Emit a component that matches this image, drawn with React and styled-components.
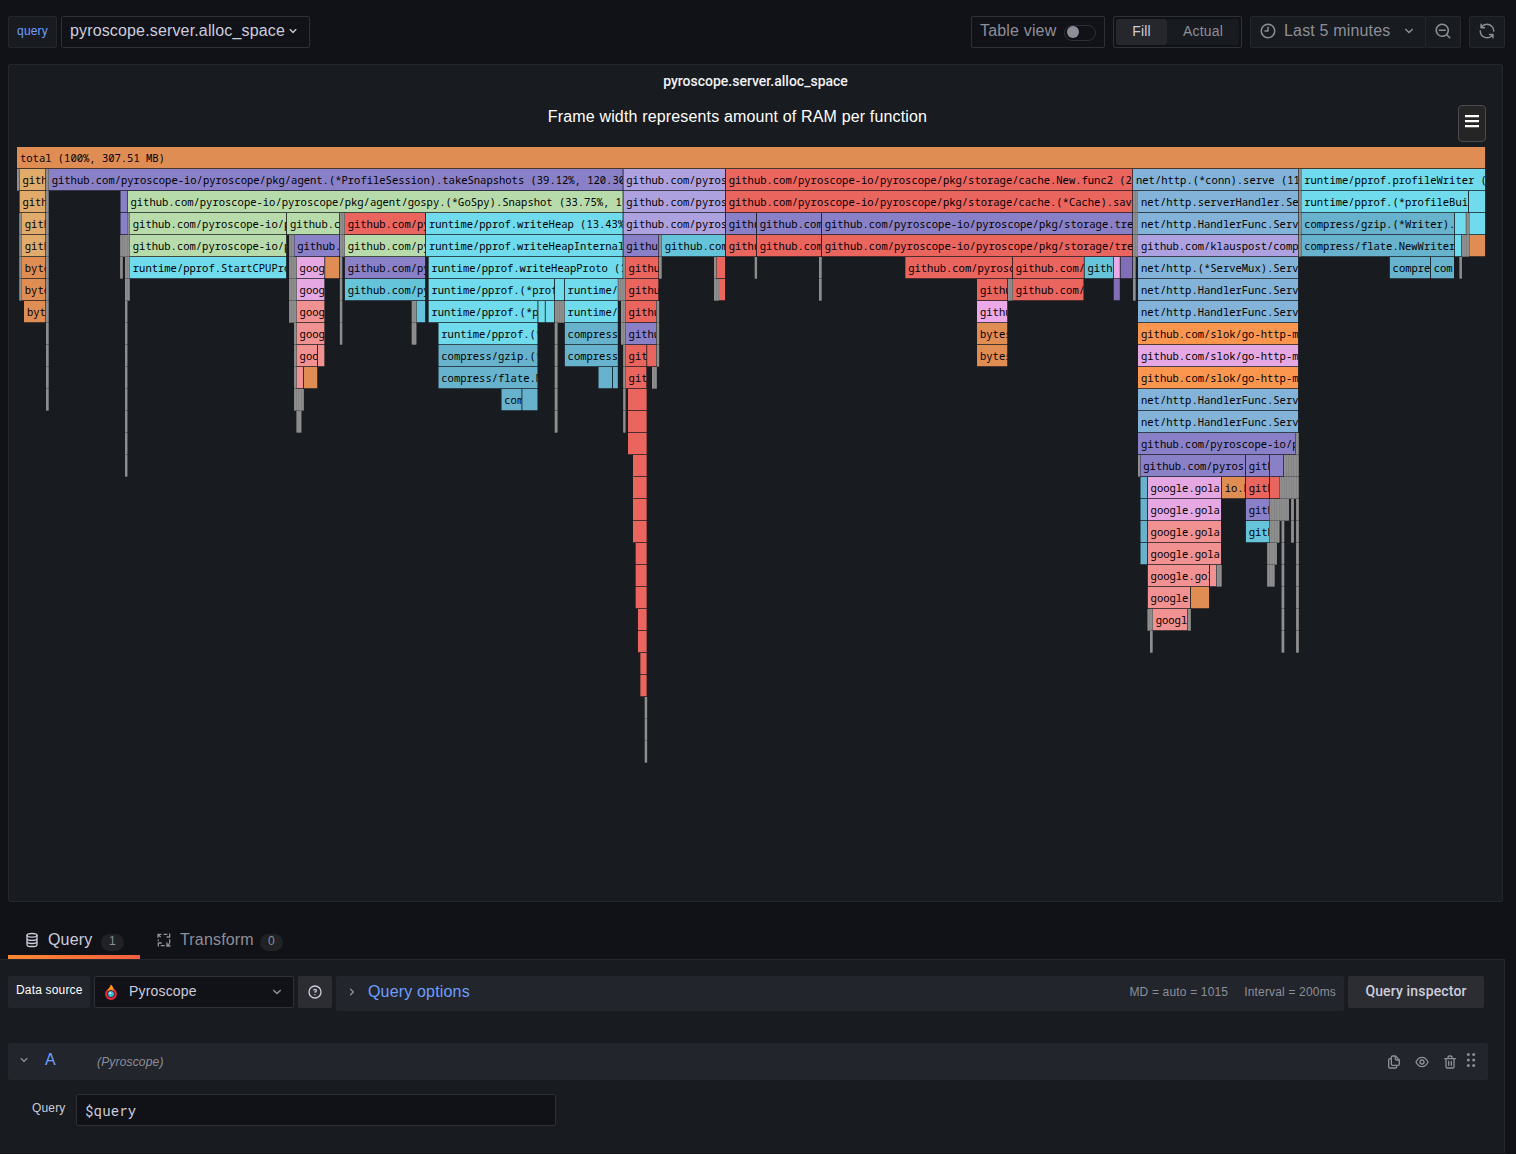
import React from 'react';
import styled, { createGlobalStyle } from 'styled-components';

const c = {
  canvas: '#111217',
  panel: '#181b1f',
  secondary: '#22252b',
  border: '#25272c',
  inputBorder: '#2e3036',
  button: '#2c2d32',
  text: '#ccccdc',
  muted: '#8e8e99',
  link: '#6e9fff',
};

const GlobalStyle = createGlobalStyle`
  * { box-sizing: border-box; }
  body {
    margin: 0;
    background: ${c.canvas};
    color: ${c.text};
    font-family: "Liberation Sans", Arial, sans-serif;
    font-size: 16px;
    letter-spacing: 0.01071em;
    overflow: hidden;
  }
`;

/* ---------- icons ---------- */

const PATHS = {
  angleDown: 'M17,9.17a1,1,0,0,0-1.41,0L12,12.71,8.46,9.17a1,1,0,0,0-1.41,0,1,1,0,0,0,0,1.42l4.24,4.24a1,1,0,0,0,1.42,0L17,10.59A1,1,0,0,0,17,9.17Z',
  angleRight: 'M14.83,11.29,10.59,7.05a1,1,0,0,0-1.42,0,1,1,0,0,0,0,1.41L12.71,12,9.17,15.54a1,1,0,0,0,0,1.41,1,1,0,0,0,.71.29,1,1,0,0,0,.71-.29l4.24-4.24A1,1,0,0,0,14.83,11.29Z',
  clock: 'M12,2A10,10,0,1,0,22,12,10,10,0,0,0,12,2Zm0,18a8,8,0,1,1,8-8A8,8,0,0,1,12,20ZM12,6a1,1,0,0,0-1,1v4H8a1,1,0,0,0,0,2h4a1,1,0,0,0,1-1V7A1,1,0,0,0,12,6Z',
  zoomOut: 'M21.71,20.29,18,16.61A9,9,0,1,0,16.61,18l3.68,3.68a1,1,0,0,0,1.42,0A1,1,0,0,0,21.71,20.29ZM11,18a7,7,0,1,1,7-7A7,7,0,0,1,11,18ZM15,10H7a1,1,0,0,0,0,2h8a1,1,0,0,0,0-2Z',
  sync: 'M19.91,15.51H15.38a1,1,0,0,0,0,2h2.4A8,8,0,0,1,4,12a1,1,0,0,0-2,0,10,10,0,0,0,16.88,7.23V21a1,1,0,0,0,2,0V16.5A1,1,0,0,0,19.91,15.51ZM12,2A10,10,0,0,0,5.12,4.77V3a1,1,0,0,0-2,0V7.5a1,1,0,0,0,1,1h4.5a1,1,0,0,0,0-2H6.22A8,8,0,0,1,20,12a1,1,0,0,0,2,0A10,10,0,0,0,12,2Z',
  question: 'M11.29,15.29a1.58,1.58,0,0,0-.12.15.76.76,0,0,0-.09.18.64.64,0,0,0-.06.18,1.36,1.36,0,0,0,0,.2.84.84,0,0,0,.08.38.9.9,0,0,0,.54.54.94.94,0,0,0,.76,0,.9.9,0,0,0,.54-.54A1,1,0,0,0,13,16a1,1,0,0,0-.29-.71A1,1,0,0,0,11.29,15.29ZM12,2A10,10,0,1,0,22,12,10,10,0,0,0,12,2Zm0,18a8,8,0,1,1,8-8A8,8,0,0,1,12,20ZM12,7A3,3,0,0,0,9.4,8.5a1,1,0,1,0,1.73,1A1,1,0,0,1,12,9a1,1,0,0,1,0,2,1,1,0,1,0,0,2,3,3,0,0,0,0-6Z',
  trash: 'M10,18a1,1,0,0,0,1-1V11a1,1,0,0,0-2,0v6A1,1,0,0,0,10,18ZM20,6H16V5a3,3,0,0,0-3-3H11A3,3,0,0,0,8,5V6H4A1,1,0,0,0,4,8H5V19a3,3,0,0,0,3,3h8a3,3,0,0,0,3-3V8h1a1,1,0,0,0,0-2ZM10,5a1,1,0,0,1,1-1h2a1,1,0,0,1,1,1V6H10Zm7,14a1,1,0,0,1-1,1H8a1,1,0,0,1-1-1V8H17Zm-3-1a1,1,0,0,0,1-1V11a1,1,0,0,0-2,0v6A1,1,0,0,0,14,18Z',
  eye: 'M21.92,11.6C19.9,6.91,16.1,4,12,4S4.1,6.91,2.08,11.6a1,1,0,0,0,0,.8C4.1,17.09,7.9,20,12,20s7.9-2.91,9.92-7.6A1,1,0,0,0,21.92,11.6ZM12,18c-3.17,0-6.17-2.29-7.9-6C5.83,8.29,8.83,6,12,6s6.17,2.29,7.9,6C18.17,15.71,15.17,18,12,18ZM12,8a4,4,0,1,0,4,4A4,4,0,0,0,12,8Zm0,6a2,2,0,1,1,2-2A2,2,0,0,1,12,14Z',
  copy: 'M21,8.94a1.31,1.31,0,0,0-.06-.27l0-.09a1.07,1.07,0,0,0-.19-.28h0l-6-6h0a1.07,1.07,0,0,0-.28-.19.32.32,0,0,0-.09,0A.88.88,0,0,0,14.05,2H10A3,3,0,0,0,7,5V6H6A3,3,0,0,0,3,9V19a3,3,0,0,0,3,3h8a3,3,0,0,0,3-3V18h1a3,3,0,0,0,3-3V9S21,9,21,8.94ZM15,5.41,17.59,8H16a1,1,0,0,1-1-1ZM15,19a1,1,0,0,1-1,1H6a1,1,0,0,1-1-1V9A1,1,0,0,1,6,8H7v7a3,3,0,0,0,3,3h5Zm4-4a1,1,0,0,1-1,1H10a1,1,0,0,1-1-1V5a1,1,0,0,1,1-1h3V7a3,3,0,0,0,3,3h3Z',
};

const Glyph = styled.svg`
  display: block;
  flex: none;
  margin-bottom: ${(p) => p.$lift || 0}px;
  fill: currentColor;
`;

const Icon = ({ name, size = 16, lift }) => (
  <Glyph $lift={lift} width={size} height={size} viewBox="0 0 24 24">
    <path d={PATHS[name]} />
  </Glyph>
);

const StrokeGlyph = styled(Glyph)`
  fill: none;
  stroke: currentColor;
  stroke-width: 2;
  stroke-linecap: round;
`;

const DatabaseIcon = () => (
  <StrokeGlyph width="16" height="16" viewBox="0 0 24 24">
    <ellipse cx="12" cy="5" rx="7.500" ry="2.800" />
    <path d="M4.500 5v14c0 1.600 3.400 2.800 7.500 2.800s7.500-1.200 7.500-2.800V5M4.500 9.700c0 1.600 3.400 2.800 7.500 2.800s7.500-1.200 7.500-2.800M4.500 14.400c0 1.600 3.400 2.800 7.500 2.800s7.500-1.200 7.500-2.800" />
  </StrokeGlyph>
);

const ProcessIcon = () => (
  <StrokeGlyph width="16" height="16" viewBox="0 0 24 24">
    <path d="M3 8V3.500H7.500M3.500 4L6.500 7M12 3.500h4.500M16.500 7.500H20.500V3M20.500 11.500V16M16.500 16.500V21H21M17 20.500l3-3M12.500 20.500H8M8 16.500H3.500V21M3.500 13V12" />
  </StrokeGlyph>
);

const DragDots = () => (
  <Glyph width="10" height="16" viewBox="0 0 10 16">
    {[2.5, 8, 13.5].map((y) => (
      <React.Fragment key={y}>
        <circle cx="2.300" cy={y} r="1.500" />
        <circle cx="7.700" cy={y} r="1.500" />
      </React.Fragment>
    ))}
  </Glyph>
);

const PyroscopeLogo = () => (
  <Glyph width="16" height="16" viewBox="0 0 16 16">
    <circle cx="8" cy="10" r="4.800" fill="#181b1f" stroke="#ed2939" strokeWidth="2.200" />
    <path d="M7.600 0.400c2.200 1.300 3 3.200 3.200 6.400L8 5.800 5 6.800C4.700 4.500 7.300 3.500 7.600 0.400Z" fill="#f9961a" />
    <circle cx="8" cy="10" r="3" fill="#35b8d0" />
    <circle cx="7.200" cy="9.200" r="1.100" fill="#b9eef7" />
  </Glyph>
);

/* ---------- toolbar ---------- */

const Page = styled.div`
  display: flex;
  flex-direction: column;
  width: 1516px;
  height: 1154px;
  padding-bottom: 1px;
`;

const Toolbar = styled.header`
  display: flex;
  justify-content: space-between;
  height: 64px;
  padding: 16px 11px 16px 8px;
`;

const Group = styled.div`
  display: flex;
  gap: ${(p) => p.$gap || 0}px;
`;

const VariableLabel = styled.label`
  display: flex;
  align-items: center;
  justify-content: center;
  width: 49px;
  height: 32px;
  padding-bottom: 2px;
  border: 1px solid ${c.border};
  border-radius: 2px;
  background: ${c.panel};
  color: ${c.link};
  font-size: 12px;
`;

const Outlined = styled.div`
  display: flex;
  align-items: center;
  width: ${(p) => p.$w}px;
  height: 32px;
  padding: ${(p) => p.$pad || '0 8px'};
  border: 1px solid ${c.inputBorder};
  border-radius: 2px;
  background: ${c.canvas};
  color: ${(p) => (p.$muted ? c.muted : c.text)};
`;

const Label = styled.span`
  padding-bottom: ${(p) => (p.$lift === undefined ? 3 : p.$lift)}px;
  line-height: 20px;
  white-space: nowrap;
`;

const VariableValue = styled(Label)`
  letter-spacing: 0.150px;
`;

const Switch = styled.span`
  display: flex;
  align-items: center;
  width: 32px;
  height: 16px;
  margin: 1px 0 0 8px;
  padding: 0 2px 1px;
  border: 1px solid ${c.inputBorder};
  border-radius: 8px;
  &::before {
    content: '';
    width: 12px;
    height: 12px;
    border-radius: 50%;
    background: ${c.muted};
  }
`;

const Segment = styled.button`
  flex: ${(p) => p.$grow};
  height: 26px;
  padding: 0 0 2px;
  border: 0;
  border-radius: 2px;
  background: ${(p) => (p.$active ? '#26272c' : c.panel)};
  color: ${(p) => (p.$active ? c.text : c.muted)};
  font: 14px "Liberation Sans", Arial, sans-serif;
  letter-spacing: 0.01071em;
`;

const ToolButton = styled.button`
  display: flex;
  align-items: center;
  justify-content: ${(p) => (p.$spread ? 'flex-start' : 'center')};
  width: ${(p) => p.$w}px;
  height: 32px;
  margin-left: ${(p) => p.$ml || 0}px;
  padding: 0 ${(p) => (p.$spread ? 7 : 0)}px 0 ${(p) => (p.$spread ? 8 : 0)}px;
  border: 1px solid ${c.border};
  border-radius: 2px;
  background: ${c.panel};
  color: ${c.muted};
  font: inherit;
  letter-spacing: inherit;
`;

const TimeText = styled(Label)`
  flex: 1;
  margin-left: 7px;
  text-align: left;
`;

/* ---------- flame graph panel ---------- */

const Panel = styled.section`
  display: flex;
  flex-direction: column;
  width: 1495px;
  height: 838px;
  margin-left: 8px;
  padding: 0 8px;
  border: 1px solid ${c.border};
  border-radius: 2px;
  background: ${c.panel};
`;

const PanelTitle = styled.h2`
  margin: 0;
  height: 32px;
  color: #f0f0f6;
  font: 500 14px/32px Roboto, sans-serif;
  letter-spacing: 0;
  text-align: center;
`;

const ChartHeader = styled.div`
  display: flex;
  align-items: flex-start;
  height: 50px;
  padding: 8px 8px 0 0;
`;

const ChartTitle = styled.div`
  flex: 1;
  padding: 3px 0 0 0;
  color: #fff;
  letter-spacing: 0.155px;
  line-height: 18px;
  text-align: center;
`;

const MenuButton = styled.button`
  display: flex;
  align-items: center;
  justify-content: center;
  width: 28px;
  height: 37px;
  padding: 0 0 5px;
  border: 1px solid #4b4b4d;
  border-radius: 4px;
  background: #252525;
  color: #fff;
`;

const Chart = styled.svg`
  display: block;
  width: 1478px;
  height: 640px;
  flex: none;
`;

const FrameText = styled.text`
  font: 10.500px "Noto Sans Mono", "DejaVu Sans Mono", monospace;
  letter-spacing: 0;
  white-space: pre;
  fill: #000;
`;

const O = '#e08d54';
const T = '#e0ab6b';
const P = '#8a80c7';
const G = '#b7dbab';
const L = '#aea1e0';
const R = '#eb655f';
const B = '#83b3d8';
const C = '#6fdbed';
const D = '#67b3cd';
const E = '#66c4da';
const K = '#e5a8e2';
const S = '#f29191';
const V = '#806eb7';
const F = '#fc964f';
const X = '#8e8e8e';

const HF = 'net/http.HandlerFunc.ServeHTTP';
const GH = 'github.com/pyroscope-io/pyroscope/pkg/';
const SLOK = 'github.com/slok/go-http-metrics/middleware';
const GG = 'google.golang.org/protobuf';

/* Each row lists its frames as [start, end, fill, name]. */
const ROWS = [
  [[17, 1485.8, O, 'total (100%, 307.51 MB)']],
  [[17, 19.4, X], [19.4, 46.1, T, GH], [46.1, 48.7, X], [48.7, 623.3, P, GH + 'agent.(*ProfileSession).takeSnapshots (39.12%, 120.30 MB)'], [623.3, 725.7, L, GH], [725.7, 1133, R, GH + 'storage/cache.New.func2 (27.75%, 85.33 MB)'], [1133, 1298.8, B, 'net/http.(*conn).serve (11.26%, 34.63 MB)'], [1298.8, 1301.2, X], [1301.2, 1485.8, C, 'runtime/pprof.profileWriter (12.54%)']],
  [[19.4, 46.1, T, GH], [46.1, 48.7, X], [120.3, 127.5, P], [127.5, 623.3, G, GH + 'agent/gospy.(*GoSpy).Snapshot (33.75%, 103.78 MB)'], [623.3, 725.7, L, GH], [725.7, 1133, R, GH + 'storage/cache.(*Cache).saveToDisk'], [1133, 1138, X], [1138, 1298.8, B, 'net/http.serverHandler.ServeHTTP'], [1298.8, 1301.2, X], [1301.2, 1468.8, C, 'runtime/pprof.(*profileBuilder)'], [1468.8, 1485.8, C]],
  [[19.4, 21.8, X], [21.8, 46.1, T, GH], [46.1, 48.7, X], [120.3, 127.5, P], [127.5, 129.8, X], [129.8, 286.9, G, GH], [286.9, 339.9, G, GH], [339.9, 344.7, X], [344.7, 425.9, R, GH], [425.9, 623.3, C, 'runtime/pprof.writeHeap (13.43%, 41.31 MB)'], [623.3, 725.7, L, GH], [725.7, 756.7, P, GH], [756.7, 821.7, P, GH], [821.7, 1133, P, GH + 'storage.treeFromBytes'], [1133, 1138, X], [1138, 1298.8, B, HF], [1298.8, 1301.2, X], [1301.2, 1454.6, D, 'compress/gzip.(*Writer).Write'], [1454.6, 1466.4, C], [1466.4, 1469.2, X], [1469.2, 1485.8, C]],
  [[19.4, 21.8, X], [21.8, 46.1, T, GH], [46.1, 48.7, X], [120.3, 129.8, X], [129.8, 286.9, G, GH], [289.2, 294.2, X], [294.2, 339.9, P, GH], [339.9, 344.7, X], [344.7, 425.9, G, GH], [425.9, 623.3, C, 'runtime/pprof.writeHeapInternal (13.43%)'], [623.3, 659.1, P, GH], [659.1, 661.7, X], [661.7, 725.7, E, GH], [725.7, 756.7, R, GH], [756.7, 821.7, R, GH], [821.7, 1133, R, GH + 'storage/tree.Deserialize'], [1133, 1138, X], [1138, 1298.8, L, 'github.com/klauspost/compress'], [1298.8, 1301.2, X], [1301.2, 1454.6, D, 'compress/flate.NewWriter'], [1454.6, 1461.7, C], [1461.7, 1469.2, X], [1469.2, 1485.8, O]],
  [[19.4, 21.8, X], [21.8, 46.1, O, 'bytes.makeSlice'], [46.1, 48.7, X], [120.3, 122.8, X], [125, 129.8, X], [129.8, 286.9, C, 'runtime/pprof.StartCPUProfile'], [289.2, 296.6, X], [296.6, 325.1, K, GG], [325.1, 339.9, O], [339.9, 342.4, X], [344.7, 425.9, P, GH], [428.4, 623.3, C, 'runtime/pprof.writeHeapProto (13.27%)'], [623.3, 625.6, X], [625.6, 659.1, R, GH], [659.1, 661.7, X], [714, 716.5, X], [716.5, 725.8, R], [754.8, 757.2, X], [819.1, 821.7, X], [905.2, 1012.7, R, GH], [1012.7, 1084.4, R, GH], [1084.4, 1113.5, E, 'gith'], [1113.5, 1120.4, '#eda8e8'], [1120.4, 1133, V], [1133, 1135.7, X], [1138, 1298.8, B, 'net/http.(*ServeMux).ServeHTTP'], [1389.6, 1430.7, D, 'compre'], [1430.7, 1454.6, D, 'com'], [1459.6, 1462, X]],
  [[19.4, 21.8, X], [21.8, 46.1, O, 'bytes.makeSlice'], [46.1, 48.7, X], [125, 129.8, X], [289.2, 296.6, X], [296.6, 325.1, K, GG], [339.9, 342.4, X], [344.7, 425.9, E, GH], [428.4, 554.8, C, 'runtime/pprof.(*profileBuilder)'], [554.8, 564.6, C], [564.6, 618.4, C, 'runtime/pprof'], [618.4, 625.6, X], [625.6, 659.1, R, GH], [714, 719, X], [719, 725.8, R], [819.1, 821.7, X], [977, 1008, R, GH], [1008, 1012.7, X], [1012.7, 1084.2, R, GH], [1113.5, 1120.4, V], [1133, 1135.7, X], [1138, 1298.8, B, HF]],
  [[24, 46.1, O, 'bytes.makeSlice'], [46.1, 48.7, X], [125, 127.5, X], [289.2, 296.6, X], [296.6, 325.1, S, GG], [339.9, 342.4, X], [411.8, 416.5, X], [416.5, 425.9, E], [428.4, 538.2, C, 'runtime/pprof.(*profMap)'], [538.2, 545.4, C], [545.4, 554.8, C], [554.8, 564.6, X], [564.6, 618.4, C, 'runtime/pprof'], [621, 625.6, X], [625.6, 656.7, R, GH], [656.7, 659.3, X], [977, 1008, '#eda8e8', GH], [1138, 1298.8, B, HF]],
  [[46.1, 48.7, X], [125, 127.5, X], [294.2, 296.6, X], [296.6, 325.1, S, GG], [339.9, 342.4, X], [411.8, 416.5, X], [438.3, 538.2, C, 'runtime/pprof.(*profileBuilder)'], [554.8, 557.6, X], [564.6, 618.4, D, 'compress/gzip'], [621, 625.6, X], [625.6, 656.7, P, GH], [656.7, 659.3, X], [977, 1008, O, 'bytes.(*Buffer)'], [1138, 1298.8, F, SLOK]],
  [[46.1, 48.7, X], [125, 127.5, X], [294.2, 296.6, X], [296.6, 317.7, S, GG], [317.7, 325.1, S], [438.3, 538.2, D, 'compress/gzip.(*Writer)'], [554.8, 557.6, X], [564.6, 618.4, D, 'compress/flate'], [623.3, 625.6, X], [625.6, 647.1, R, GH], [647.1, 656.7, R], [656.7, 659.3, X], [977, 1008, O, 'bytes.makeSlice'], [1138, 1298.8, K, SLOK]],
  [[46.1, 48.7, X], [125, 127.5, X], [294.2, 296.6, X], [296.6, 303.6, S], [303.6, 318, O], [438.3, 538.2, D, 'compress/flate.NewWriter'], [554.8, 557.6, X], [598.3, 612.8, D], [612.8, 618.4, D], [623.3, 625.6, X], [625.6, 647.1, R, GH], [652, 656.9, X], [1138, 1298.8, F, SLOK]],
  [[46.1, 48.7, X], [125, 127.5, X], [294.2, 303.9, X], [501.3, 522.2, D, 'compress'], [522.2, 538.2, D], [554.8, 557.6, X], [623.3, 625.6, X], [628, 647.3, R], [1138, 1298.8, B, HF]],
  [[125, 127.5, X], [296.6, 301.5, X], [554.8, 557.6, X], [623.3, 625.6, X], [628, 647.3, R], [1138, 1298.8, B, HF]],
  [[125, 127.5, X], [628, 647.3, R], [1138, 1295.7, P, GH], [1295.7, 1298.8, X]],
  [[125, 127.5, X], [633, 647.3, R], [1138, 1140.3, X], [1140.3, 1245.7, P, GH], [1245.7, 1269.6, P, GH], [1269.6, 1283.9, P], [1283.9, 1298.8, X]],
  [[633, 647.3, R], [1140.3, 1147.6, D], [1147.6, 1221.7, K, 'google.gola'], [1221.7, 1245.7, O, 'io.ReadAll'], [1245.7, 1269.6, R, GH], [1269.6, 1279.6, R], [1279.6, 1298.8, X]],
  [[633, 647.3, R], [1140.3, 1147.6, D], [1147.6, 1221.7, K, 'google.gola'], [1245.7, 1269.6, P, GH], [1269.6, 1289.1, X], [1291.2, 1294, X], [1296.2, 1298.9, X]],
  [[633, 647.3, R], [1140.3, 1147.6, D], [1147.6, 1221.7, S, 'google.gola'], [1245.7, 1269.6, E, GH], [1269.6, 1279.6, X], [1281.7, 1284.4, X], [1291.2, 1294, X], [1296.2, 1298.9, X]],
  [[635.4, 647.3, R], [1140.3, 1147.6, D], [1147.6, 1221.7, S, 'google.gola'], [1267.3, 1277, X], [1281.7, 1284.4, X], [1296.2, 1298.9, X]],
  [[635.4, 647.3, R], [1147.6, 1209.7, S, GG], [1209.7, 1216.7, S], [1216.7, 1221.7, X], [1267.3, 1274.7, X], [1281.7, 1284.4, X], [1296.2, 1298.9, X]],
  [[635.4, 647.3, R], [1147.6, 1190.7, S, 'google'], [1190.7, 1209.7, O], [1281.7, 1284.4, X], [1296.2, 1298.9, X]],
  [[637.8, 647.3, R], [1147.6, 1152.7, X], [1152.7, 1188.1, S, 'googl'], [1188.1, 1190.9, X], [1281.7, 1284.4, X], [1296.2, 1298.9, X]],
  [[637.8, 647.3, R], [1150, 1152.7, X], [1281.7, 1284.4, X], [1296.2, 1298.9, X]],
  [[640.2, 647.3, R]],
  [[640.2, 647.3, R]],
  [[644.8, 647.3, X]],
  [[644.8, 647.3, X]],
  [[644.8, 647.3, X]],
];

const ROW_H = 22;
const GAP = 0.5;
const CHAR_W = 6.32;

const slivers = (from, to) => {
  const n = Math.max(1, Math.round((to - from) / 2.45));
  const w = (to - from) / n;
  return Array.from({ length: n }, (_, i) => [from + i * w, w]);
};

/* Only the characters that reach into the frame are worth drawing. */
const fit = (name, width) => name.slice(0, Math.ceil((width - 3 - 0.8) / CHAR_W));

const Frame = ({ from, to, fill, name, y }) => {
  if (fill === X) {
    return (
      <g>
        <rect x={from} y={y} width={to - from - 0.1} height={ROW_H - GAP} fill="#777777" />
        {slivers(from, to).map(([x, w]) => (
          <rect key={x} x={x} y={y} width={w - 0.3} height={ROW_H - GAP} fill={fill} />
        ))}
      </g>
    );
  }
  const width = to - from - GAP;
  return (
    <svg x={from} y={y} width={width} height={ROW_H - GAP} overflow="hidden">
      <rect width="100%" height="100%" fill={fill} />
      {name && <FrameText x="3" y="15">{fit(name, width)}</FrameText>}
    </svg>
  );
};

const FlameGraph = () => (
  <Chart viewBox="17 147 1478 640">
    {ROWS.map((row, r) =>
      row.map(([from, to, fill, name]) => (
        <Frame key={`${r}-${from}`} from={from} to={to} fill={fill} name={name} y={147 + r * ROW_H} />
      )),
    )}
  </Chart>
);

/* ---------- query editor ---------- */

const Tabs = styled.nav`
  display: flex;
  height: 57px;
  padding: 17px 0 0 8px;
`;

const Tab = styled.div`
  display: flex;
  align-items: center;
  width: ${(p) => p.$w}px;
  height: 40px;
  padding: 2px 0 0 16px;
  color: ${(p) => (p.$active ? c.text : c.muted)};
  background: ${(p) => (p.$active ? 'linear-gradient(90deg, #ff8833 0%, #f55f3e 100%) bottom / 100% 4px no-repeat' : 'none')};
`;

const TabText = styled(Label)`
  width: ${(p) => p.$w}px;
  margin-left: 8px;
  padding-bottom: 1px;
`;

const Counter = styled.span`
  width: 23px;
  height: 17px;
  margin: 4px 0 0 8px;
  border-radius: 9px;
  background: #202226;
  color: ${c.muted};
  font-size: 12px;
  line-height: 15px;
  text-align: center;
`;

const Editor = styled.section`
  flex: 1;
  width: 1505px;
  padding: 16px 16px 0 8px;
  border: solid ${c.border};
  border-width: 1px 1px 0 0;
  background: ${c.panel};
`;

const SourceRow = styled.div`
  display: flex;
  align-items: flex-start;
  gap: 4px;
  height: 67px;
`;

const SourceLabel = styled.div`
  display: flex;
  align-items: center;
  width: 82px;
  height: 32px;
  padding: 0 0 4px 8px;
  border-radius: 2px;
  background: ${c.secondary};
  color: #fff;
  font-size: 12px;
  white-space: nowrap;
`;

const SourceName = styled(Label)`
  flex: 1;
  margin-left: 10px;
  font-size: 14px;
`;

const Dim = styled.span`
  color: ${c.muted};
`;

const SolidButton = styled.button`
  display: flex;
  align-items: center;
  justify-content: center;
  width: ${(p) => p.$w}px;
  height: 32px;
  padding: 0 0 ${(p) => p.$lift || 0}px;
  border: 0;
  border-radius: 2px;
  background: ${c.button};
  color: ${c.text};
  font: 500 14px Roboto, sans-serif;
  letter-spacing: 0.01071em;
`;

const Options = styled.div`
  display: flex;
  align-items: center;
  width: 1008px;
  height: 35px;
  padding: 0 8px;
  border-radius: 2px;
  background: ${c.secondary};
  color: ${c.muted};
`;

const OptionsTitle = styled(Label)`
  flex: 1;
  margin-left: 8px;
  color: ${c.link};
`;

const Meta = styled.span`
  margin-left: 16px;
  padding-bottom: 3px;
  font-size: 12px;
  white-space: nowrap;
`;

const QueryHeader = styled.div`
  display: flex;
  align-items: center;
  width: 1480px;
  height: 37px;
  padding: 0 12px 0 8px;
  border-radius: 2px;
  background: ${c.secondary};
  color: ${c.muted};
`;

const RefId = styled(Label)`
  width: 52px;
  margin-left: 13px;
  padding-bottom: 4px;
  color: ${c.link};
`;

const SourceHint = styled.em`
  flex: 1;
  font-size: 12px;
`;

const Actions = styled.div`
  display: flex;
  align-items: center;
  gap: 12px;
`;

const DragHandle = styled.span`
  margin: 0 0 3px -4px;
`;

const FieldRow = styled.div`
  display: flex;
  align-items: center;
  margin-top: 14px;
  padding-left: 24px;
`;

const FieldLabel = styled.label`
  width: 44px;
  padding-bottom: 4px;
  font-size: 12px;
`;

const Field = styled.div`
  width: 480px;
  height: 32px;
  padding: 1px 8px 0;
  border: 1px solid ${c.inputBorder};
  border-radius: 2px;
  background: ${c.canvas};
  font: 14px/30px "Roboto Mono", "DejaVu Sans Mono", monospace;
`;

export default function App() {
  return (
    <Page>
      <GlobalStyle />
      <Toolbar>
        <Group $gap={4}>
          <VariableLabel>query</VariableLabel>
          <Outlined $w={249}>
            <VariableValue>pyroscope.server.alloc_space</VariableValue>
            <Icon name="angleDown" lift={2} />
          </Outlined>
        </Group>
        <Group $gap={8}>
          <Outlined $w={134} $muted>
            <Label>Table view</Label>
            <Switch />
          </Outlined>
          <Outlined $w={129} $pad="2px">
            <Segment $active $grow="0 0 51px">Fill</Segment>
            <Segment $grow="1">Actual</Segment>
          </Outlined>
          <Group>
            <ToolButton $w={176} $spread>
              <Icon name="clock" size={18} lift={2} />
              <TimeText>Last 5 minutes</TimeText>
              <Icon name="angleDown" size={18} lift={2} />
            </ToolButton>
            <ToolButton $w={36} $ml={-1}>
              <Icon name="zoomOut" size={18} lift={2} />
            </ToolButton>
          </Group>
          <ToolButton $w={36}>
            <Icon name="sync" size={18} lift={2} />
          </ToolButton>
        </Group>
      </Toolbar>

      <Panel>
        <PanelTitle>pyroscope.server.alloc_space</PanelTitle>
        <ChartHeader>
          <ChartTitle>Frame width represents amount of RAM per function</ChartTitle>
          <MenuButton>
            <Glyph width="14" height="13" viewBox="0 0 14 13">
              <path d="M0 0h14v2.300H0zM0 5h14v2.300H0zM0 10h14v2.300H0z" />
            </Glyph>
          </MenuButton>
        </ChartHeader>
        <FlameGraph />
      </Panel>

      <Tabs>
        <Tab $active $w={132}>
          <DatabaseIcon />
          <TabText $w={45}>Query</TabText>
          <Counter>1</Counter>
        </Tab>
        <Tab $w={150}>
          <ProcessIcon />
          <TabText $w={72}>Transform</TabText>
          <Counter>0</Counter>
        </Tab>
      </Tabs>

      <Editor>
        <SourceRow>
          <SourceLabel>Data source</SourceLabel>
          <Outlined $w={200} $pad="0 7px 0 8px">
            <PyroscopeLogo />
            <SourceName>Pyroscope</SourceName>
            <Dim>
              <Icon name="angleDown" size={18} />
            </Dim>
          </Outlined>
          <SolidButton $w={34}>
            <Icon name="question" />
          </SolidButton>
          <Options>
            <Icon name="angleRight" lift={3} />
            <OptionsTitle>Query options</OptionsTitle>
            <Meta>MD = auto = 1015</Meta>
            <Meta>Interval = 200ms</Meta>
          </Options>
          <SolidButton $w={136} $lift={2}>Query inspector</SolidButton>
        </SourceRow>
        <QueryHeader>
          <Icon name="angleDown" lift={4} />
          <RefId>A</RefId>
          <SourceHint>(Pyroscope)</SourceHint>
          <Actions>
            <Icon name="copy" />
            <Icon name="eye" />
            <Icon name="trash" />
            <DragHandle>
              <DragDots />
            </DragHandle>
          </Actions>
        </QueryHeader>
        <FieldRow>
          <FieldLabel>Query</FieldLabel>
          <Field>$query</Field>
        </FieldRow>
      </Editor>
    </Page>
  );
}
